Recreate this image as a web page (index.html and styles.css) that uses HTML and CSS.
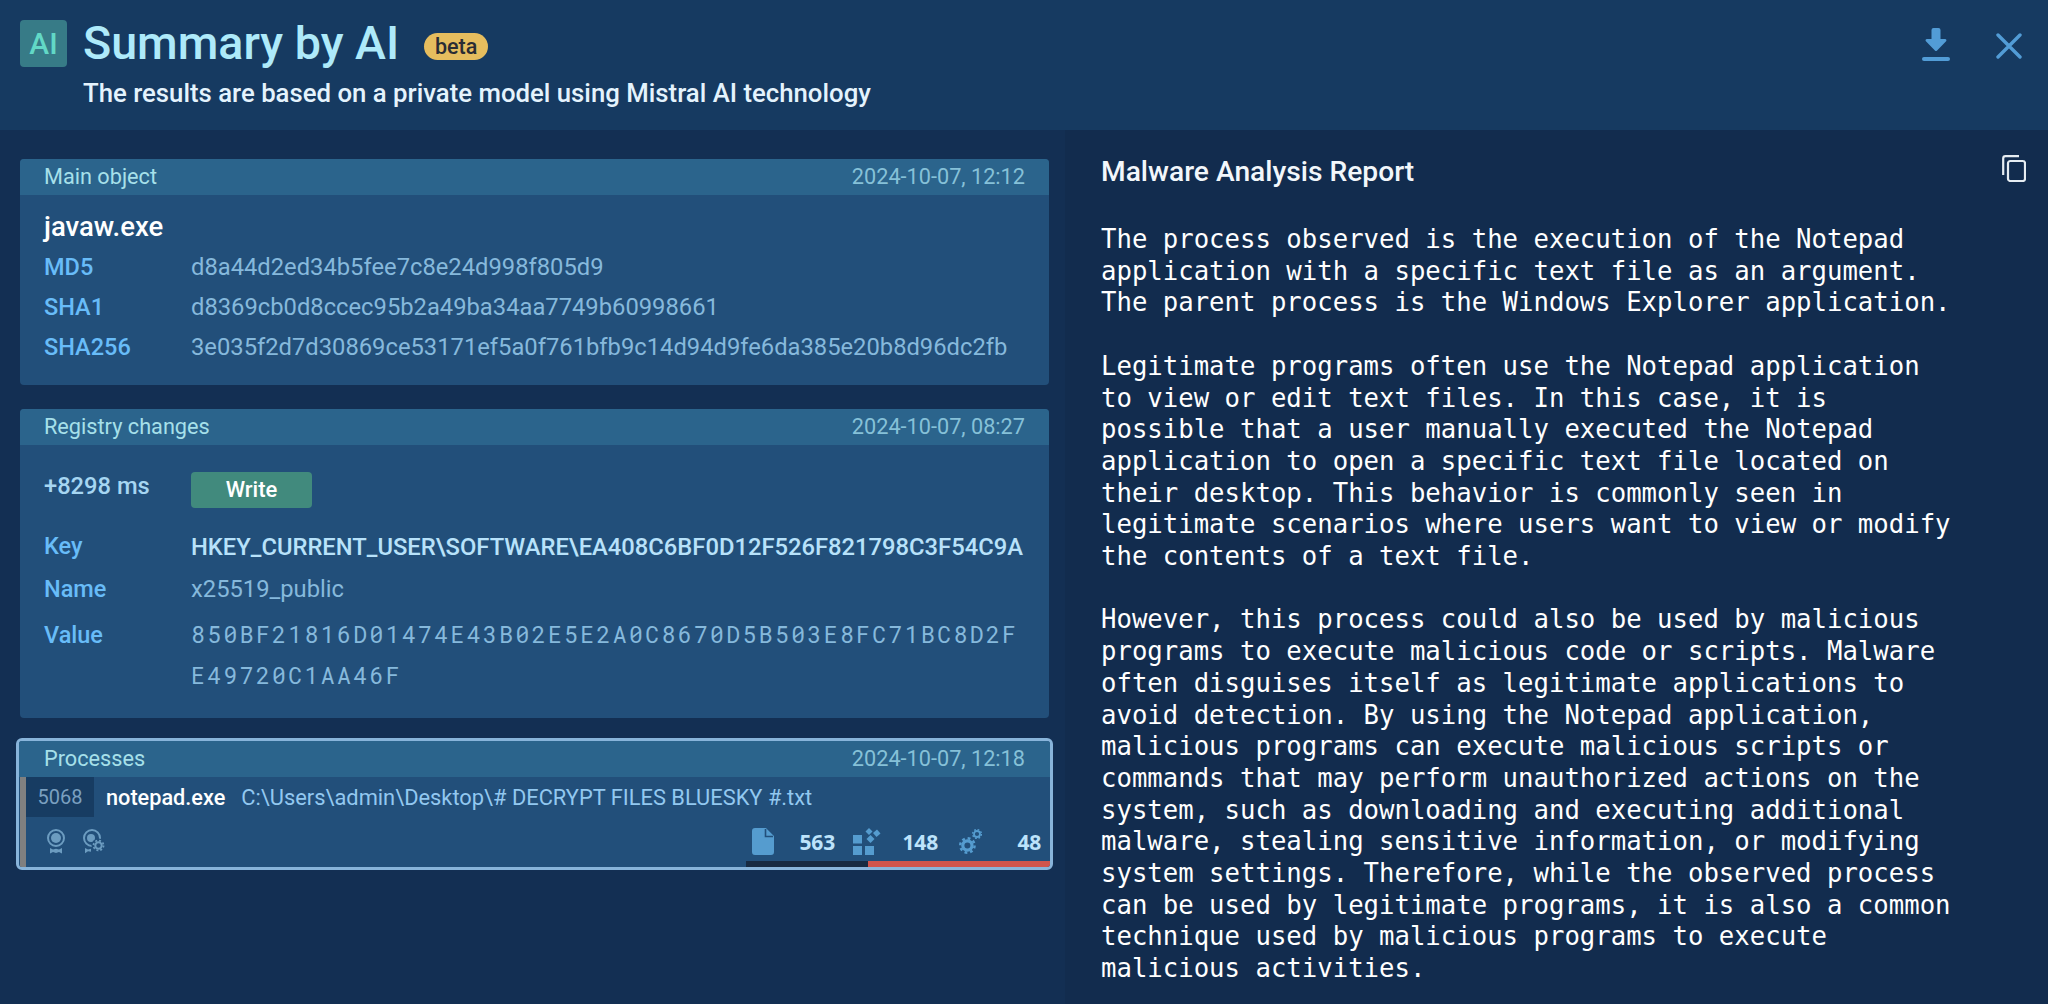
FILE: index.html
```
<!DOCTYPE html>
<html lang="en">
<head>
<meta charset="utf-8">
<title>Summary by AI</title>
<link rel="stylesheet" href="styles.css">
</head>
<body>
<header class="top">
  <div class="logo">AI</div>
  <div class="heading">
    <div class="title-row"><h1>Summary by AI</h1><span class="beta">beta</span></div>
    <p class="subtitle">The results are based on a private model using Mistral AI technology</p>
  </div>
  <div class="actions">
    <svg class="ic-download" viewBox="0 0 28 33"><path d="M9.5 2a2 2 0 0 1 2-2h5a2 2 0 0 1 2 2v9h4.6c1.2 0 1.8 1.4 1 2.3l-9 9.2a1.5 1.5 0 0 1-2.2 0l-9-9.2c-.8-.9-.2-2.3 1-2.3h4.6z"/><rect x="0" y="29" width="28" height="4" rx="2"/></svg>
    <svg class="ic-close" viewBox="0 0 26 26"><path d="M2 2l22 22M24 2L2 24"/></svg>
  </div>
</header>
<main class="content">
  <section class="left">
    <article class="card">
      <div class="card-head"><span>Main object</span><span class="date">2024-10-07, 12:12</span></div>
      <div class="card-body main-obj">
        <div class="fname">javaw.exe</div>
        <div class="kv"><span class="k">MD5</span><span class="v">d8a44d2ed34b5fee7c8e24d998f805d9</span></div>
        <div class="kv"><span class="k">SHA1</span><span class="v">d8369cb0d8ccec95b2a49ba34aa7749b60998661</span></div>
        <div class="kv"><span class="k">SHA256</span><span class="v">3e035f2d7d30869ce53171ef5a0f761bfb9c14d94d9fe6da385e20b8d96dc2fb</span></div>
      </div>
    </article>
    <article class="card">
      <div class="card-head"><span>Registry changes</span><span class="date">2024-10-07, 08:27</span></div>
      <div class="card-body reg">
        <div class="reg-row first"><span class="time">+8298 ms</span><span class="write">Write</span></div>
        <div class="reg-row key"><span class="k">Key</span><span class="v strong">HKEY_CURRENT_USER\SOFTWARE\EA408C6BF0D12F526F821798C3F54C9A</span></div>
        <div class="reg-row name"><span class="k">Name</span><span class="v">x25519_public</span></div>
        <div class="reg-row value"><span class="k">Value</span><span class="v mono">850BF21816D01474E43B02E5E2A0C8670D5B503E8FC71BC8D2F<br>E49720C1AA46F</span></div>
      </div>
    </article>
    <article class="card selected">
      <div class="card-head"><span>Processes</span><span class="date">2024-10-07, 12:18</span></div>
      <div class="proc">
        <div class="proc-line"><span class="pid">5068</span><span class="pname">notepad.exe</span><span class="pcmd">C:\Users\admin\Desktop\# DECRYPT FILES BLUESKY #.txt</span></div>
        <div class="proc-foot">
          <div class="flags">
            <svg class="flag" viewBox="0 0 20 25"><circle cx="10" cy="9" r="8" fill="none" stroke-width="2"/><circle cx="10" cy="9" r="5"/><path d="M4 19l3 1.500 3-.700 3 .700 3-1.500v5.500l-3-1.500-3 1-3-1-3 1.500z"/></svg>
            <svg class="flag gearflag" viewBox="0 0 22 25"><circle cx="9" cy="9" r="8" fill="none" stroke-width="2"/><circle cx="8" cy="9" r="4"/><path d="M2 19l3 1.500 3-.700v3l-3-.500-3 2z"/><circle class="cut" cx="15.500" cy="16.500" r="7"/><circle class="ring" cx="15.500" cy="16.500" r="3.200" stroke-width="2"/><circle class="ring" cx="15.500" cy="16.500" r="5" stroke-width="1.800" stroke-dasharray="1.960 1.960"/></svg>
          </div>
          <div class="stats">
            <div class="stat s-file">
              <svg class="st-ic" viewBox="0 0 22 27"><path d="M3 0h10.500a1 1 0 0 1 .7.300l7.500 7.500a1 1 0 0 1 .3.700V24a3 3 0 0 1-3 3H3a3 3 0 0 1-3-3V3a3 3 0 0 1 3-3z"/><path d="M13.500 1v7.500H21" fill="none" stroke="#224f7a" stroke-width="1.600"/></svg>
              <b>563</b>
            </div>
            <div class="stat s-mod">
              <svg class="st-ic" viewBox="0 0 28 27"><rect x="0" y="7" width="9" height="8.500"/><rect x="0" y="18" width="9" height="9"/><rect x="12" y="18" width="9" height="9"/><path d="M13.500 11l4-4 4 4-4 4z"/><path d="M12.500 3.500l3.500-3.500 3.500 3.500-3.500 3.500z"/><path d="M20 5l4-3.500 3.500 4-4 3.500z"/></svg>
              <b>148</b>
            </div>
            <div class="stat s-gear">
              <svg class="st-ic gears" viewBox="0 0 23 25"><circle cx="8.400" cy="16.500" r="4.600" stroke-width="3.200"/><circle cx="8.400" cy="16.500" r="7.200" stroke-width="2.400" stroke-dasharray="2.830 2.830"/><circle cx="18" cy="5" r="3" stroke-width="1.800"/><circle cx="18" cy="5" r="4.400" stroke-width="1.400" stroke-dasharray="1.730 1.730"/></svg>
              <b>48</b>
            </div>
          </div>
        </div>
        <div class="bars"><span class="bar-dark"></span><span class="bar-red"></span></div>
      </div>
    </article>
  </section>
  <section class="right">
    <div class="report-head">
      <h2>Malware Analysis Report</h2>
      <svg class="ic-copy" viewBox="0 0 24 27"><path d="M17 1.200H3.500A2.300 2.300 0 0 0 1.200 3.500V20"/><rect x="6" y="6" width="17" height="20" rx="2.300"/></svg>
    </div>
<pre class="report">The process observed is the execution of the Notepad
application with a specific text file as an argument.
The parent process is the Windows Explorer application.

Legitimate programs often use the Notepad application
to view or edit text files. In this case, it is
possible that a user manually executed the Notepad
application to open a specific text file located on
their desktop. This behavior is commonly seen in
legitimate scenarios where users want to view or modify
the contents of a text file.

However, this process could also be used by malicious
programs to execute malicious code or scripts. Malware
often disguises itself as legitimate applications to
avoid detection. By using the Notepad application,
malicious programs can execute malicious scripts or
commands that may perform unauthorized actions on the
system, such as downloading and executing additional
malware, stealing sensitive information, or modifying
system settings. Therefore, while the observed process
can be used by legitimate programs, it is also a common
technique used by malicious programs to execute
malicious activities.</pre>
  </section>
</main>
</body>
</html>
```
FILE: styles.css
```
* { box-sizing: border-box; }
html, body { margin: 0; height: 100%; }
body {
  width: 2048px; height: 1004px; overflow: hidden;
  display: flex; flex-direction: column;
  background: #132f53; color: #fff;
  font-family: Roboto, "Liberation Sans", sans-serif;
}
.top {
  height: 130px; flex: none; background: #163a61;
  display: flex; align-items: flex-start;
  padding: 20px 26px 0 20px;
}
.logo {
  width: 47px; height: 47px; border-radius: 4px; background: #377b87;
  color: #62d8c6; font-size: 30px; font-weight: 500; line-height: 47px; text-align: center;
  margin-right: 16px;
}
.heading { flex: 1; }
.title-row { display: flex; align-items: center; height: 47px; }
h1 { margin: 0; font-size: 46.600px; font-weight: 500; color: #aeeafa; line-height: 47px; }
.beta {
  margin-left: 25px; margin-top: 6px; width: 64px; height: 27px; border-radius: 13.500px;
  background: #e6bd5e; color: #2a2c34; font-size: 21.500px; font-weight: 500; line-height: 27px; text-align: center;
}
.subtitle { margin: 11px 0 0; font-size: 25.750px; font-weight: 500; color: #e4f3fd; line-height: 30px; }
.actions { display: flex; align-items: flex-start; gap: 46px; padding-top: 8px; }
.ic-download { width: 28px; height: 33px; fill: #529cd6; }
.ic-close { width: 26px; height: 26px; margin-top: 5px; fill: none; stroke: #529cd6; stroke-width: 3.400; stroke-linecap: round; }

.content { flex: 1; display: flex; min-height: 0; }
.left { width: 1065px; flex: none; padding: 29px 16px 0 20px; display: flex; flex-direction: column; }
.right { flex: 1; background: #122c4e; padding: 25px 23px 0 36px; }

.card { background: #224f7a; border-radius: 4px; overflow: hidden; margin-bottom: 24px; flex: none; }
.card-head {
  height: 36px; background: #2b648c; color: #a6e0ea;
  display: flex; justify-content: space-between; align-items: center;
  padding: 0 24px; font-size: 21.700px; line-height: 34px;
}
.date { color: #86c1d8; }
.main-obj { height: 190px; padding: 16px 24px 0; }
.fname { font-size: 27.500px; font-weight: 500; line-height: 32px; margin-bottom: 4px; }
.kv { display: flex; height: 40px; align-items: center; }
.k { width: 147px; flex: none; color: #68bcf8; font-weight: 500; font-size: 23.500px; }
.v { color: #86b9dc; font-size: 23.750px; }
.reg { height: 273px; padding: 0 24px; }
.reg-row { display: flex; font-size: 23.700px; }
.first { height: 81px; padding-top: 25px; }
.time { width: 147px; flex: none; color: #a6d6f2; font-weight: 500; line-height: 32px; }
.write {
  width: 121px; height: 36px; margin-top: 2px; border-radius: 4px; background: #418a7d;
  color: #fff; font-weight: 500; font-size: 22px; text-align: center; line-height: 36px;
}
.key, .name { height: 42px; align-items: center; }
.key .k { margin-top: -3px; }
.strong { color: #b8e2fa; font-weight: 500; white-space: nowrap; font-size: 23.750px; }
.value { margin-top: 5px; align-items: flex-start; }
.mono { font-family: "Roboto Mono", "DejaVu Sans Mono", monospace; font-size: 23px; letter-spacing: 2.420px; line-height: 41px; margin-top: -1px; }
.value .k { line-height: 40px; }

.selected { margin: -4px 0 0 -4px; width: 1037px; border: 3px solid #88b4da; border-radius: 6px; }
.selected .card-head { padding: 0 25px 0 25px; }
.proc { border-left: 6px solid #808080; position: relative; height: 90px; margin-left: 1px; }
.proc-line { display: flex; align-items: center; height: 40px; }
.pid { width: 68px; height: 40px; background: #173c62; color: #7ba0c0; text-align: center; line-height: 40px; font-size: 20px; }
.pname { margin-left: 12px; font-size: 21.700px; font-weight: 500; color: #fff; }
.pcmd { margin-left: 16px; font-size: 21.850px; color: #92c8f0; }
.proc-foot { display: flex; justify-content: space-between; height: 43px; }
.flags { display: flex; gap: 17px; padding: 12px 0 0 20px; }
.flag { height: 25px; width: 20px; fill: #6c9cc0; stroke: #6c9cc0; stroke-width: 0; }
.gearflag { width: 22px; }
.cut { fill: #224f7a; }
.ring { fill: none; }
.stats { display: flex; padding: 6px 9px 0 0; }
.stat { display: flex; align-items: center; justify-content: space-between; height: 37px; }
.stat b { font-family: "Open Sans", Roboto, sans-serif; font-weight: 700; font-size: 21px; color: #bde3fb; letter-spacing: -.2px; }
.st-ic { fill: #559ccf; }
.gears { fill: none; stroke: #559ccf; }
.s-file { width: 98px; padding: 0 8px 0 7px; }
.s-file .st-ic { width: 22px; height: 27px; }
.s-mod { width: 109px; padding: 0 14px 0 10px; }
.s-mod .st-ic { width: 28px; height: 27px; }
.s-gear { width: 89px; padding-left: 7px; }
.s-gear .st-ic { width: 23px; height: 25px; }
.bars { position: absolute; right: 0; bottom: 0; width: 304px; height: 6px; display: flex; }
.bar-dark { width: 122px; background: #172a41; }
.bar-red { flex: 1; background: #d0544c; }

.report-head { display: flex; justify-content: space-between; align-items: flex-start; height: 69px; }
h2 { margin: 0; font-size: 28.200px; font-weight: 500; line-height: 34px; color: #f2f7fb; }
.ic-copy { width: 24px; height: 27px; fill: none; stroke: #e6edf2; stroke-width: 2.200; margin-right: -1px; }
.report {
  margin: 0; font-family: "DejaVu Sans Mono", monospace; font-size: 25.670px; line-height: 31.700px; color: #fff;
}
```
